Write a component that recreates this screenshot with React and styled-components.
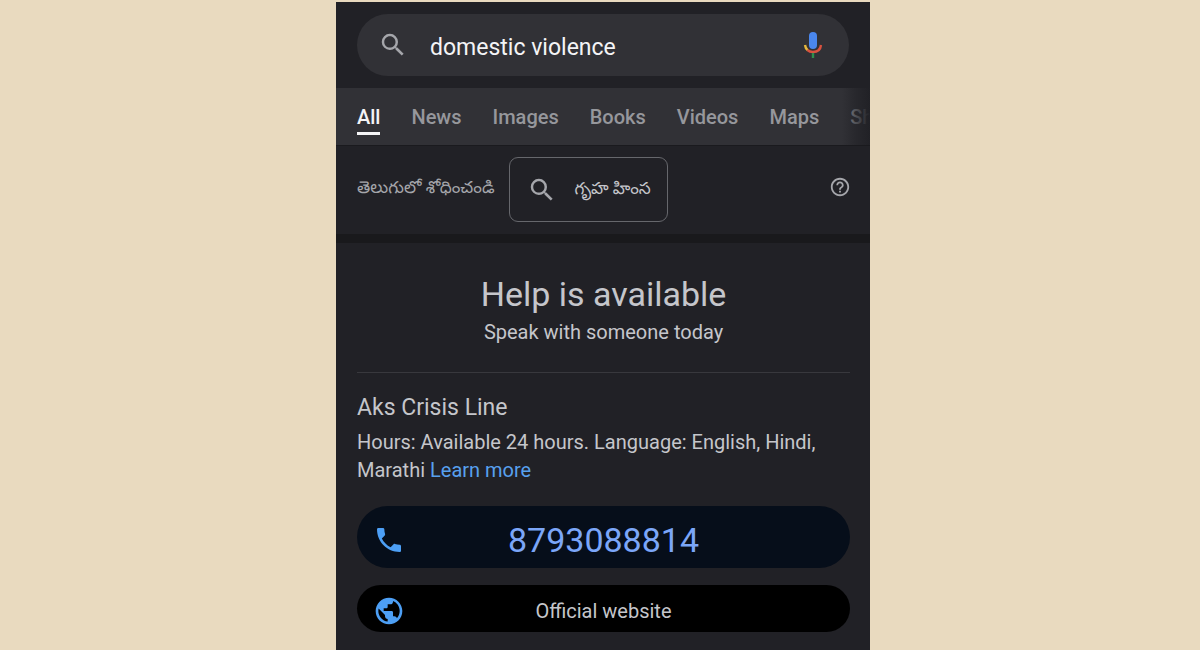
import React, { useState } from 'react';
import styled, { createGlobalStyle } from 'styled-components';
import { MdSearch, MdPhone, MdPublic, MdHelpOutline } from 'react-icons/md';

const GlobalStyle = createGlobalStyle`
   * {
      box-sizing: border-box;
   }
   body {
      margin: 0;
      background-color: #e9dabf;
      font-family: Roboto, 'Noto Sans Telugu', 'Noto Sans', sans-serif;
      font-size: 20px;
      color: #c5c6cb;
      overflow: hidden;
   }
`;

const Page = styled.div`
   display: flex;
   justify-content: center;
   height: 100vh;
   padding: 2px 0 0 6px;
`;

const Screen = styled.main`
   width: 100%;
   max-width: 534px;
   background-color: #212126;
`;

const Header = styled.header`
   padding: 12px 21px;
`;

const SearchForm = styled.form`
   display: flex;
   align-items: center;
   height: 62px;
   padding: 0 26px 0 21px;
   border-radius: 31px;
   background-color: #313136;
`;

const IconButton = styled.button`
   display: flex;
   flex: none;
   padding: 0;
   border: none;
   background: none;
   color: #a5a6ab;
   font-size: ${props => props.$size}px;
   cursor: pointer;
`;

const SearchInput = styled.input`
   flex: 1;
   min-width: 0;
   margin: 0 20px 0 22px;
   padding: 4px 0 0;
   border: none;
   outline: none;
   background: none;
   font: inherit;
   font-size: 23px;
   color: #f4f4f6;
`;

const Tabs = styled.nav`
   position: relative;
   display: flex;
   align-items: center;
   gap: 31px;
   height: 57px;
   padding: 2px 21px 0;
   overflow: hidden;
   background-color: #313136;

   &::after {
      content: '';
      position: absolute;
      top: 0;
      right: 0;
      width: 28px;
      height: 100%;
      background: linear-gradient(to right, rgba(33, 33, 38, 0), rgba(33, 33, 38, 0.6) 50%, #212126);
   }
`;

const Tab = styled.a`
   flex: none;
   padding: 5px 0 3px;
   border-bottom: 3px solid ${props => props.$active ? '#f4f4f6' : 'transparent'};
   font-weight: 500;
   line-height: 24px;
   text-decoration: none;
   color: ${props => props.$active ? '#f4f4f6' : '#96979c'};
`;

const LanguageBar = styled.section`
   display: flex;
   align-items: center;
   gap: 15px;
   padding: 11px 19px 12px 21px;
   border-top: 1px solid #1a1a1e;
   border-bottom: 9px solid #19191c;
   font-size: 17px;
   color: #a5a6ab;
`;

const LanguageLabel = styled.span`
   flex: none;
   padding-bottom: 2px;
`;

const LanguageChip = styled.button`
   display: flex;
   flex: none;
   align-items: center;
   gap: 17px;
   height: 65px;
   padding: 0 16px 0 17px;
   border: 1px solid #66676c;
   border-radius: 9px;
   background: none;
   font: inherit;
   color: #c5c6cb;
   cursor: pointer;

   svg {
      font-size: 30px;
      color: #a5a6ab;
   }
`;

const HelpButton = styled(IconButton)`
   margin-left: auto;
   padding-bottom: 5px;
`;

const Help = styled.section`
   padding: 29px 20px 18px 21px;
`;

const Intro = styled.div`
   padding-bottom: 24px;
   border-bottom: 1px solid #38383d;
   text-align: center;

   h1 {
      margin: 0;
      font-size: 34px;
      font-weight: 400;
      line-height: 44px;
   }
   p {
      margin: 0;
      line-height: 32px;
   }
`;

const CrisisLine = styled.div`
   padding: 20px 0 22px;

   h2 {
      margin: 0 0 5px;
      font-size: 23px;
      font-weight: 400;
      line-height: 30px;
   }
   p {
      margin: 0;
      line-height: 28px;
   }
   a {
      color: #58a0ee;
      text-decoration: none;
   }
`;

const Action = styled.a`
   display: grid;
   grid-template-columns: 30px 1fr 30px;
   align-items: center;
   height: ${props => props.$call ? '62px' : '47px'};
   margin-bottom: 17px;
   padding: 5px 16px 0;
   border-radius: 31px;
   background-color: ${props => props.$call ? '#060e1a' : '#000'};
   font-size: ${props => props.$call ? '34px' : '20px'};
   text-align: center;
   text-decoration: none;
   color: ${props => props.$call ? '#7ba6f8' : '#c5c6cb'};

   svg {
      font-size: 32px;
      color: #4d9ff5;
   }
`;

const MicIcon = () => (
   <svg width="20" height="28" viewBox="0 0 20 28" fill="none">
      <rect x="6" y="1" width="8" height="17" rx="4" fill="#4a87ee" />
      <path d="M2 14c.3 2.200 1.200 3.900 2.600 5.100" stroke="#e6b73c" strokeWidth="2.400" />
      <path d="M4.400 19c1.500 1.400 3.400 2 5.600 2 4.400 0 7.500-2.700 8-7" stroke="#d9523f" strokeWidth="2.400" />
      <path d="M10 22v5" stroke="#2f8f4c" strokeWidth="2.400" />
   </svg>
);

const tabs = ['All', 'News', 'Images', 'Books', 'Videos', 'Maps', 'Shopping'];

export default function App() {
   const [query, setQuery] = useState('domestic violence');
   const [active, setActive] = useState('All');

   return (
      <>
         <GlobalStyle />
         <Page>
            <Screen>
               <Header>
                  <SearchForm role='search' onSubmit={e => e.preventDefault()}>
                     <IconButton type='submit' aria-label='Search' $size={30}>
                        <MdSearch />
                     </IconButton>
                     <SearchInput
                        type='text'
                        aria-label='Search query'
                        spellCheck='false'
                        value={query}
                        onChange={e => setQuery(e.target.value)}
                     />
                     <IconButton type='button' aria-label='Search by voice' $size={28}>
                        <MicIcon />
                     </IconButton>
                  </SearchForm>
               </Header>

               <Tabs>
                  {tabs.map(tab => (
                     <Tab
                        key={tab}
                        href='#'
                        $active={tab === active}
                        onClick={() => setActive(tab)}
                     >{tab}</Tab>
                  ))}
               </Tabs>

               <LanguageBar lang='te'>
                  <LanguageLabel>తెలుగులో శోధించండి</LanguageLabel>
                  <LanguageChip type='button'>
                     <MdSearch />
                     గృహ హింస
                  </LanguageChip>
                  <HelpButton type='button' aria-label='Help' $size={22}>
                     <MdHelpOutline />
                  </HelpButton>
               </LanguageBar>

               <Help>
                  <Intro>
                     <h1>Help is available</h1>
                     <p>Speak with someone today</p>
                  </Intro>

                  <CrisisLine>
                     <h2>Aks Crisis Line</h2>
                     <p>
                        Hours: Available 24 hours. Language: English, Hindi,
                        Marathi <a href='#'>Learn more</a>
                     </p>
                  </CrisisLine>

                  <Action href='tel:8793088814' $call>
                     <MdPhone />
                     <span>8793088814</span>
                  </Action>
                  <Action href='#'>
                     <MdPublic />
                     <span>Official website</span>
                  </Action>
               </Help>
            </Screen>
         </Page>
      </>
   );
}
